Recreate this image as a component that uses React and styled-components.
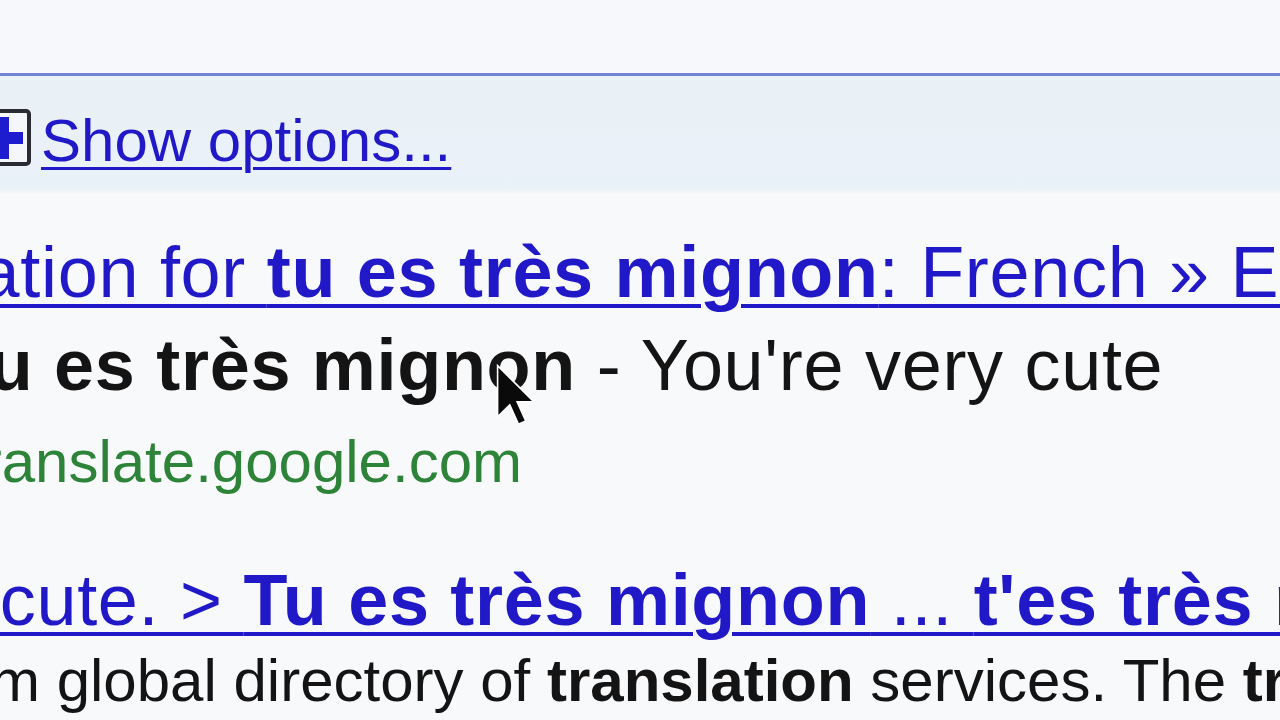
import React from "react"
import styled, { createGlobalStyle } from "styled-components"

const GlobalStyle = createGlobalStyle`
    html, body {
        margin: 0;
        padding: 0;
        background: #f8f9fb;
        overflow: hidden;
    }
    body {
        font-family: "Liberation Sans", Arial, sans-serif;
    }
`

const Page = styled.div`
    position: relative;
    width: 1280px;
    height: 720px;
    overflow: hidden;
    background: #f8f9fb;
`
const TopGap = styled.div`
    height: 73px;
    background: #f7f8fb;
`
const OptionsBar = styled.div`
    display: flex;
    align-items: center;
    gap: 10px;
    height: 120px;
    border-top: 3px solid #7183d2;
    background: linear-gradient(#e9f1f6, #eaf1f9 80%, #e8f2f7 96%, #f5f8fa);
    padding-top: 13px;
    box-sizing: border-box;
`
const ToggleBox = styled.svg`
    flex-shrink: 0;
    margin-left: -26px;
    margin-top: -8px;
`
const OptionsLink = styled.a`
    font-size: 60px;
    line-height: 70px;
    color: #2119c8;
    text-decoration: underline;
    text-decoration-thickness: 3px;
    text-underline-offset: 6px;
    white-space: nowrap;
    cursor: pointer;
`
const Results = styled.div`
    display: flex;
    flex-direction: column;
    padding-top: 39px;
`
const Title = styled.a`
    display: block;
    margin-left: ${p => p.$shift}px;
    margin-top: ${p => p.$top || 0}px;
    font-size: 72px;
    line-height: 80px;
    letter-spacing: 0.7px;
    color: #2119c8;
    text-decoration: underline;
    text-decoration-thickness: 4px;
    text-underline-offset: 7px;
    white-space: nowrap;
    b { font-weight: 700; }
`
const Snippet = styled.div`
    margin-left: ${p => p.$shift}px;
    margin-top: ${p => p.$top || 0}px;
    font-size: ${p => p.$size}px;
    line-height: ${p => p.$size + 10}px;
    letter-spacing: ${p => (p.$size > 64 ? 0.7 : 0)}px;
    color: #141414;
    white-space: nowrap;
    b { font-weight: 700; }
`
const Url = styled.div`
    margin-left: ${p => p.$shift}px;
    margin-top: 21px;
    font-size: 60px;
    line-height: 70px;
    color: #2d8439;
    white-space: nowrap;
`
const Cursor = styled.svg`
    position: absolute;
    left: 496px;
    top: 364px;
`

const PlusIcon = () => (
    <ToggleBox width="57" height="57" viewBox="0 0 57 57">
        <rect x="2" y="2" width="53" height="53" rx="3" fill="#f4f6f9" stroke="#2b2b33" strokeWidth="4" />
        <rect x="7" y="23" width="42" height="12" fill="#1d1ccf" />
        <rect x="21" y="8" width="14" height="42" fill="#1d1ccf" />
    </ToggleBox>
)

const Arrow = () => (
    <Cursor width="40" height="64" viewBox="0 0 12.5 20">
        <path d="M0.5 0.5 L0.5 16.5 L4.3 12.8 L7 18.8 L9.3 17.8 L6.6 11.8 L11.8 11.8 Z" fill="#0a0a0a" stroke="#ffffff" strokeWidth="0.5" />
    </Cursor>
)

export default function App() {
    return (
        <Page>
            <GlobalStyle />
            <TopGap />
            <OptionsBar>
                <PlusIcon />
                <OptionsLink>Show options...</OptionsLink>
            </OptionsBar>
            <Results>
                <Title $shift={-222}>
                    Translation for <b>tu es très mignon</b>: French » English
                </Title>
                <Snippet $shift={-36} $size={72} $top={12}>
                    <b>tu es très mignon</b> - You're very cute
                </Snippet>
                <Url $shift={-35}>translate.google.com</Url>
                <Title $shift={-384} $top={63}>
                    You're very cute. &gt; <b>Tu es très mignon</b> ... <b>t'es très mignon</b>
                </Title>
                <Snippet $shift={-80} $size={60} $top={6}>
                    from global directory of <b>translation</b> services. The <b>translation</b> of
                </Snippet>
            </Results>
            <Arrow />
        </Page>
    )
}
